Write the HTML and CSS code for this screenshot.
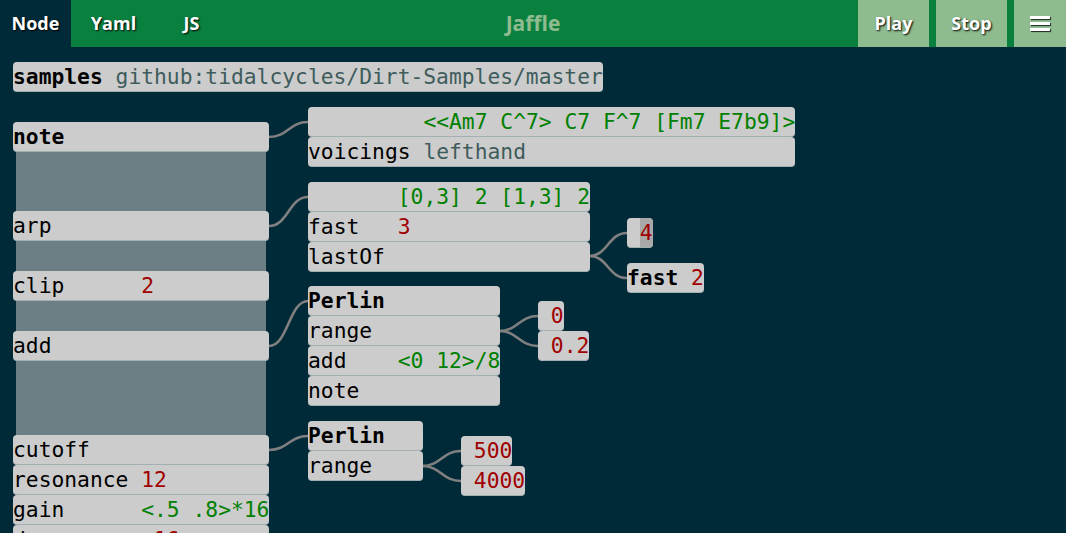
FILE: index.html
```html
<!DOCTYPE html>
<html>
<head>
<meta charset="utf-8">
<title>Jaffle</title>
<link rel="stylesheet" href="styles.css">
</head>
<body>
<header class="top">
  <nav class="tabs">
    <div class="tab active">Node</div>
    <div class="tab">Yaml</div>
    <div class="tab">JS</div>
  </nav>
  <div class="title">Jaffle</div>
  <div class="actions">
    <div class="btn">Play</div>
    <div class="btn">Stop</div>
    <div class="btn menu"><span class="bar"></span><span class="bar"></span><span class="bar"></span></div>
  </div>
</header>
<main class="canvas">
  <svg class="wires" viewBox="0 47 1066 486" width="1066" height="486">
    <path d="M269 137 C288 137 289 122 308 122"/>
    <path d="M269 226 C288 226 289 197 308 197"/>
    <path d="M589 256 C608 256 608 233 627 233"/>
    <path d="M589 256 C608 256 608 278 627 278"/>
    <path d="M269 346 C288 346 289 301 308 301"/>
    <path d="M499 331 C518 331 519 316 538 316"/>
    <path d="M499 331 C518 331 519 346 538 346"/>
    <path d="M269 450 C288 450 289 436 308 436"/>
    <path d="M422 466 C441 466 442 451 461 451"/>
    <path d="M422 466 C441 466 442 481 461 481"/>
  </svg>

  <div class="block b-samples">
    <div class="row"><span class="k b">samples</span><span class="s">github:tidalcycles/Dirt-Samples/master</span></div>
  </div>

  <div class="block b-main">
    <div class="row"><span class="k b">note</span><span></span></div>
    <div class="fill h59"></div>
    <div class="row"><span class="k">arp</span><span></span></div>
    <div class="fill h30"></div>
    <div class="row"><span class="k">clip</span><span class="r">2</span></div>
    <div class="fill h30"></div>
    <div class="row"><span class="k">add</span><span></span></div>
    <div class="fill h74"></div>
    <div class="row"><span class="k">cutoff</span><span></span></div>
    <div class="row"><span class="k">resonance</span><span class="r">12</span></div>
    <div class="row"><span class="k">gain</span><span class="g">&lt;.5 .8&gt;*16</span></div>
    <div class="row"><span class="k">decay</span><span class="r">.16</span></div>
  </div>

  <div class="block b-chord">
    <div class="row"><span class="k"></span><span class="g">&lt;&lt;Am7 C^7&gt; C7 F^7 [Fm7 E7b9]&gt;</span></div>
    <div class="row"><span class="k">voicings</span><span class="s">lefthand</span></div>
  </div>

  <div class="block b-arp">
    <div class="row"><span class="k"></span><span class="g">[0,3] 2 [1,3] 2</span></div>
    <div class="row"><span class="k">fast</span><span class="r">3</span></div>
    <div class="row"><span class="k">lastOf</span><span></span></div>
  </div>

  <div class="block b-four">
    <div class="row"><span class="k"></span><span class="r sel">4</span></div>
  </div>

  <div class="block b-fast2">
    <div class="row"><span class="k b">fast</span><span class="r">2</span></div>
  </div>

  <div class="block b-perlin1">
    <div class="row"><span class="k b">Perlin</span><span></span></div>
    <div class="row"><span class="k">range</span><span></span></div>
    <div class="row"><span class="k">add</span><span class="g">&lt;0 12&gt;/8</span></div>
    <div class="row"><span class="k">note</span><span></span></div>
  </div>

  <div class="block b-zero">
    <div class="row"><span class="k"></span><span class="r">0</span></div>
  </div>
  <div class="block b-zero2">
    <div class="row"><span class="k"></span><span class="r">0.2</span></div>
  </div>

  <div class="block b-perlin2">
    <div class="row"><span class="k b">Perlin</span><span></span></div>
    <div class="row"><span class="k">range</span><span></span></div>
  </div>

  <div class="block b-500">
    <div class="row"><span class="k"></span><span class="r">500</span></div>
  </div>
  <div class="block b-4000">
    <div class="row"><span class="k"></span><span class="r">4000</span></div>
  </div>
</main>
</body>
</html>
```

FILE: styles.css
```css
html, body {
  margin: 0;
  padding: 0;
  background: #012a38;
  overflow: hidden;
}

.top {
  display: grid;
  grid-template-columns: 1fr auto 1fr;
  align-items: stretch;
  height: 47px;
  background: #0a803f;
  font-family: "Open Sans", "Noto Sans", sans-serif;
  font-weight: 700;
  font-size: 18px;
  color: #fff;
}

.tabs {
  display: flex;
  gap: 7px;
}

.tab {
  width: 71px;
  text-align: center;
  line-height: 47px;
  text-shadow: 1px 1px 2px #000;
}

.tab.active {
  background: #012a38;
}

.title {
  line-height: 47px;
  font-size: 21px;
  color: #8fbc8f;
}

.actions {
  display: flex;
  justify-content: flex-end;
  gap: 7px;
}

.btn {
  width: 71px;
  background: #8fbc8f;
  text-align: center;
  line-height: 47px;
  text-shadow: 1px 1px 2px #000;
}

.btn.menu {
  width: 52px;
  display: flex;
  flex-direction: column;
  align-items: center;
  justify-content: center;
  gap: 3px;
}

.bar {
  display: block;
  width: 20px;
  height: 3px;
  background: #fff;
  box-shadow: 1px 1px 1px rgba(0, 0, 0, 0.8);
}

.canvas {
  position: relative;
  height: 486px;
  overflow: hidden;
  background: #012a38;
}

.wires {
  position: absolute;
  left: 0;
  top: 0;
}

.wires path {
  fill: none;
  stroke: #808080;
  stroke-width: 2.6;
}

.block {
  position: absolute;
  display: flex;
  flex-direction: column;
  font-family: "DejaVu Sans Mono", monospace;
  font-size: 21.3px;
  color: #000;
}

.row {
  display: grid;
  grid-template-columns: var(--k) var(--v);
  height: 29px;
  line-height: 30px;
  background: #cccccc;
  border-radius: 4px;
  border-bottom: 1px solid #a3afb2;
  white-space: pre;
  overflow: hidden;
}

.b { font-weight: 700; }
.g { color: #008000; }
.r { color: #a00000; }
.s { color: #3e5c5c; }

.sel {
  background: #a9a9a9;
  border-radius: 0 4px 4px 0;
}

.fill {
  margin: 0 3px;
  background: #6c7f85;
}
.h30 { height: 30px; }
.h59 { height: 59px; }
.h74 { height: 74px; }

.b-samples { left: 13px; top: 15px; --k: 8ch; --v: 38ch; }
.b-main    { left: 13px; top: 75px; --k: 10ch; --v: 10ch; }
.b-chord   { left: 308px; top: 60px; --k: 9ch; --v: 29ch; }
.b-arp     { left: 308px; top: 135px; --k: 7ch; --v: 15ch; }
.b-four    { left: 627px; top: 171px; --k: 1ch; --v: 1ch; }
.b-fast2   { left: 627px; top: 216px; --k: 5ch; --v: 1ch; }
.b-perlin1 { left: 308px; top: 239px; --k: 7ch; --v: 8ch; }
.b-zero    { left: 538px; top: 254px; --k: 1ch; --v: 1ch; }
.b-zero2   { left: 538px; top: 284px; --k: 1ch; --v: 3ch; }
.b-perlin2 { left: 308px; top: 374px; --k: 7ch; --v: 2ch; }
.b-500     { left: 461px; top: 389px; --k: 1ch; --v: 3ch; }
.b-4000    { left: 461px; top: 419px; --k: 1ch; --v: 4ch; }
```
